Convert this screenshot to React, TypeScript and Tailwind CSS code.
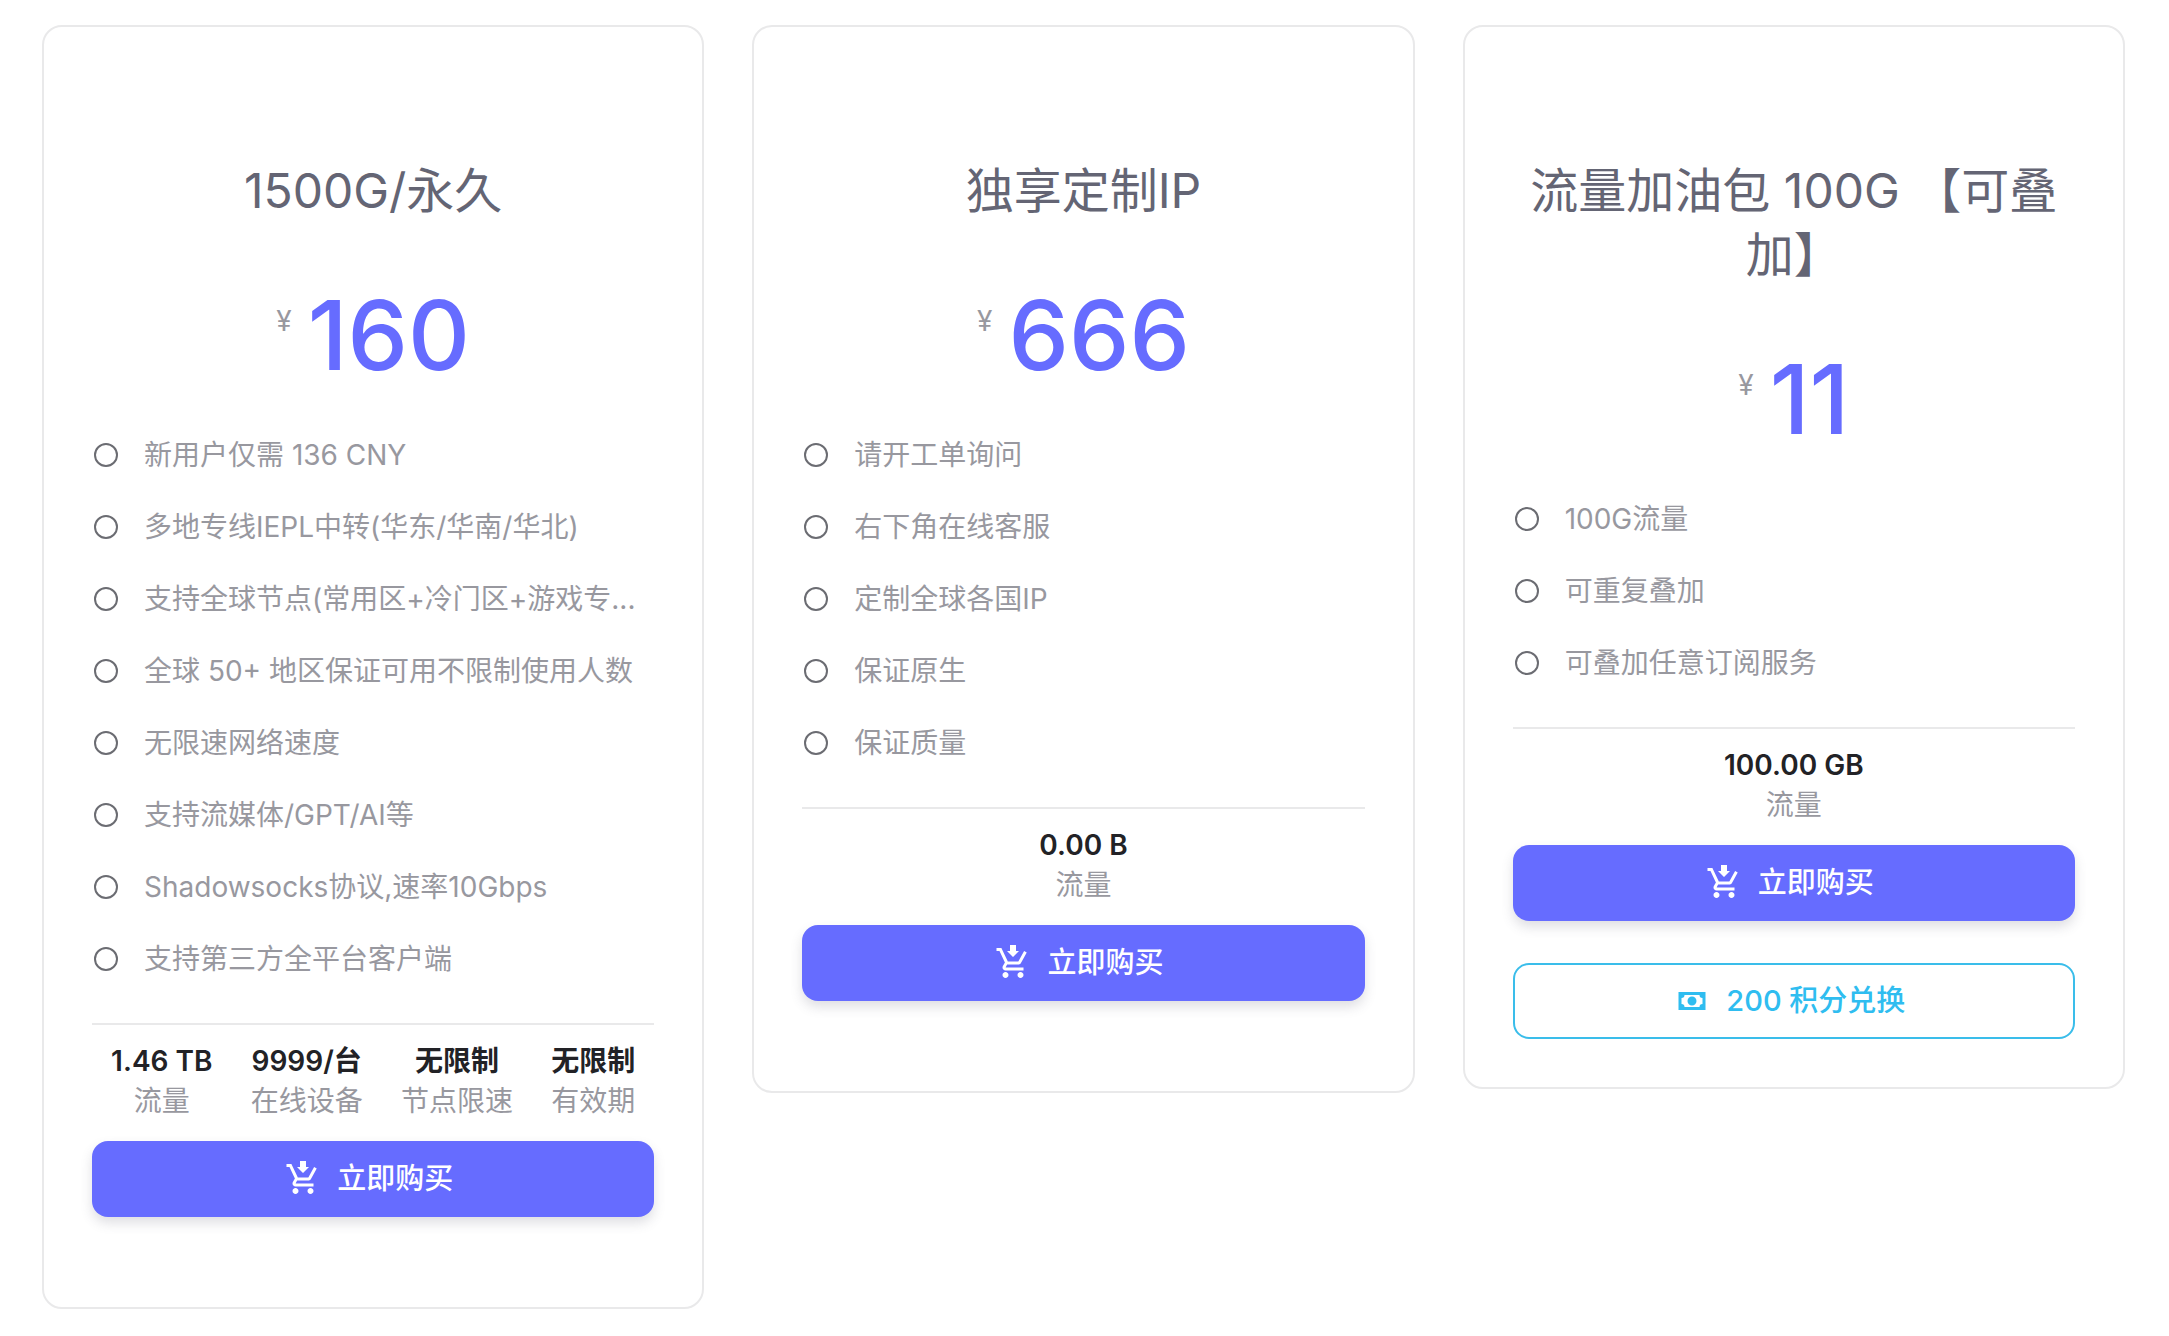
type Stat = {
  label: string
  value: string
}

type Plan = {
  id: string
  name: string
  price: number
  features: string[]
  stats: Stat[]
  points?: number
}

const plans: Plan[] = [
  {
    id: 'forever-1500',
    name: '1500G/永久',
    price: 160,
    features: [
      '新用户仅需 136 CNY',
      '多地专线IEPL中转(华东/华南/华北)',
      '支持全球节点(常用区+冷门区+游戏专...',
      '全球 50+ 地区保证可用不限制使用人数',
      '无限速网络速度',
      '支持流媒体/GPT/AI等',
      'Shadowsocks协议,速率10Gbps',
      '支持第三方全平台客户端',
    ],
    stats: [
      { label: '流量', value: '1.46 TB' },
      { label: '在线设备', value: '9999/台' },
      { label: '节点限速', value: '无限制' },
      { label: '有效期', value: '无限制' },
    ],
  },
  {
    id: 'custom-ip',
    name: '独享定制IP',
    price: 666,
    features: [
      '请开工单询问',
      '右下角在线客服',
      '定制全球各国IP',
      '保证原生',
      '保证质量',
    ],
    stats: [{ label: '流量', value: '0.00 B' }],
  },
  {
    id: 'addon-100',
    name: '流量加油包 100G 【可叠加】',
    price: 11,
    features: ['100G流量', '可重复叠加', '可叠加任意订阅服务'],
    stats: [{ label: '流量', value: '100.00 GB' }],
    points: 200,
  },
]

function CartIcon() {
  return (
    <svg viewBox="0 0 24 24" className="size-9 shrink-0" fill="currentColor" aria-hidden="true">
      <path d="M10 0V4H8L12 8L16 4H14V0M1 2V4H3L6.6 11.59L5.25 14.04C5.09 14.32 5 14.65 5 15C5 16.1 5.9 17 7 17H19V15H7.42C7.29 15 7.17 14.89 7.17 14.75L7.2 14.63L8.1 13H15.55C16.3 13 16.96 12.59 17.3 11.97L21.16 4.96L19.42 4H19.41L18.31 6L15.55 11H8.53L8.4 10.73L6.16 6L5.21 4L4.27 2M7 18C5.9 18 5 18.9 5 20S5.9 22 7 22 9 21.1 9 20 8.1 18 7 18M17 18C15.9 18 15 18.9 15 20S15.9 22 17 22 19 21.1 19 20 18.1 18 17 18Z" />
    </svg>
  )
}

function CashIcon() {
  return (
    <svg viewBox="0 0 24 24" className="size-9 shrink-0" fill="currentColor" aria-hidden="true">
      <path d="M3 6H21V18H3V6M12 9A3 3 0 0 1 15 12A3 3 0 0 1 12 15A3 3 0 0 1 9 12A3 3 0 0 1 12 9M7 8A2 2 0 0 1 5 10V14A2 2 0 0 1 7 16H17A2 2 0 0 1 19 14V10A2 2 0 0 1 17 8H7Z" />
    </svg>
  )
}

function PlanCard({ plan }: { plan: Plan }) {
  return (
    <section
      className={
        plan.points
          ? 'rounded-[20px] border-2 border-[#e9e9ea] px-12 pt-[132px] pb-12'
          : 'rounded-[20px] border-2 border-[#e9e9ea] px-12 pt-[132px] pb-[90px]'
      }
    >
      <h2 className="text-center text-5xl leading-[64px] font-normal text-[#646574]">
        {plan.name}
      </h2>

      <div className="mt-16 flex justify-center gap-4">
        <span className="mt-[14px] text-[28px] leading-10 text-[#98989f]">¥</span>
        <span className="text-8xl font-medium text-[#666cff]">{plan.price}</span>
      </div>

      <ul className="mt-9">
        {plan.features.map((feature) => (
          <li key={feature} className="flex h-[72px] items-center gap-[26px] pl-0.5">
            <span className="size-6 shrink-0 rounded-full border-2 border-[#6b6c72]" />
            <span className="truncate text-[28px] leading-10 text-[#98989f]">{feature}</span>
          </li>
        ))}
      </ul>

      <dl className="mt-7 flex justify-around border-t-2 border-[#e9e9ea] pt-4 text-center text-[28px] leading-10">
        {plan.stats.map((stat) => (
          <div key={stat.label} className="flex flex-col-reverse">
            <dt className="text-[#98989f]">{stat.label}</dt>
            <dd className="font-semibold text-[#222226]">{stat.value}</dd>
          </div>
        ))}
      </dl>

      <button
        type="button"
        className="mt-5 flex h-[76px] w-full items-center justify-center gap-4 rounded-2xl bg-[#666cff] pr-2 text-[29px] font-medium text-white shadow-[0_6px_12px_rgba(76,78,100,0.18)]"
      >
        <CartIcon />
        立即购买
      </button>

      {plan.points ? (
        <button
          type="button"
          className="mt-[42px] flex h-[76px] w-full items-center justify-center gap-4 rounded-2xl border-2 border-[#3abdea] pr-2 text-[29px] font-medium text-[#2fbdf0]"
        >
          <CashIcon />
          {plan.points} 积分兑换
        </button>
      ) : null}
    </section>
  )
}

export default function App() {
  return (
    <main
      lang="zh-CN"
      className="grid grid-cols-3 items-start gap-12 bg-white py-[25px] pr-11 pl-[42px] font-[Inter,'Noto_Sans_CJK_SC',sans-serif]"
    >
      {plans.map((plan) => (
        <PlanCard key={plan.id} plan={plan} />
      ))}
    </main>
  )
}
